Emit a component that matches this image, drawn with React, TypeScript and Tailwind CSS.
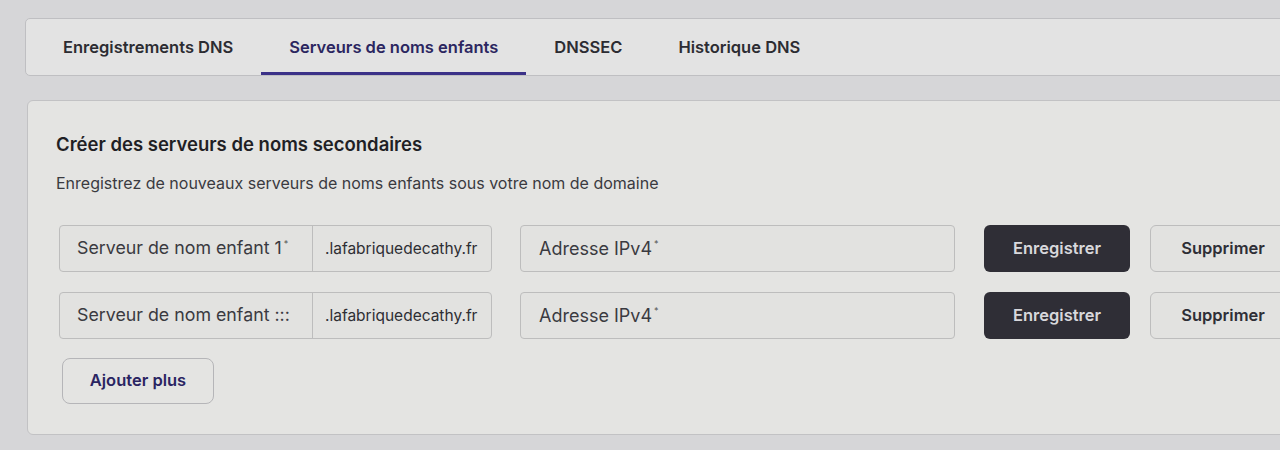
import { ReactNode } from 'react'

const tabs = ['Enregistrements DNS', 'Serveurs de noms enfants', 'DNSSEC', 'Historique DNS']

function Row({ label, children }: { label: ReactNode; children?: ReactNode }) {
  return (
    <div className="flex items-center">
      {/* Sous-domaine + suffixe */}
      <div className="flex h-[47px] w-[433px] rounded-[4px] border border-[#bdbdbd] bg-[#e2e2e0]">
        <div className="flex w-[253px] items-center border-r border-[#bdbdbd] pl-[17px] text-[17.8px] text-[#3a3a40]">
          {label}
        </div>
        <div className="flex flex-1 items-center pl-[12px] text-[15.5px] text-[#2e2e34]">.lafabriquedecathy.fr</div>
      </div>

      {/* IPv4 */}
      <div className="ml-[28px] flex h-[47px] w-[435px] items-center rounded-[4px] border border-[#bdbdbd] bg-[#e2e2e0] pl-[18px] text-[18px] text-[#3a3a40]">
        Adresse IPv4<sup className="ml-[2px] text-[9px] text-[#555]">*</sup>
      </div>

      <button className="ml-[29px] h-[47px] w-[146px] rounded-[6px] bg-[#2f2e36] text-[16.5px] font-semibold text-[#d8d8dc]">
        Enregistrer
      </button>
      <button className="ml-[20px] h-[47px] w-[146px] rounded-[6px] border border-[#bdbdbd] bg-[#e2e2e0] text-[16.5px] font-semibold text-[#2e2e36]">
        Supprimer
      </button>
      {children}
    </div>
  )
}

export default function App() {
  return (
    <div
      className="h-[450px] w-[1280px] overflow-hidden bg-[#d6d6d8] pt-[18px] pl-[25px]"
      style={{ fontFamily: 'Inter, "Noto Sans", sans-serif' }}
    >
      {/* Onglets */}
      <div className="flex h-[58px] w-[1300px] rounded-[5px] border border-[#bfbfc2] bg-[#e3e3e3] pl-[9px]">
        {tabs.map((t, i) => (
          <div
            key={t}
            className={
              i === 1
                ? 'flex items-center border-b-[3px] border-[#3b3188] px-[28px] pt-[3px] text-[16.5px] font-semibold text-[#2b2660]'
                : 'flex items-center px-[28px] text-[16.5px] font-semibold text-[#2c2c32]'
            }
          >
            {t}
          </div>
        ))}
      </div>

      {/* Carte serveurs */}
      <div className="mt-[24px] ml-[2px] h-[335px] w-[1300px] rounded-[6px] border border-[#c2c2c4] bg-[#e4e4e2] pt-[30px] pl-[28px]">
        <h2 className="text-[18.5px] font-semibold text-[#1f1f25]">Créer des serveurs de noms secondaires</h2>
        <p className="mt-[12px] text-[16px] text-[#3a3a40]">
          Enregistrez de nouveaux serveurs de noms enfants sous votre nom de domaine
        </p>

        <div className="mt-[30px] ml-[3px] flex flex-col gap-[20px]">
          <Row
            label={
              <>
                Serveur de nom enfant 1<sup className="ml-[2px] text-[9px] text-[#555]">*</sup>
              </>
            }
          />
          <Row label="Serveur de nom enfant :::" />
        </div>

        <button className="mt-[19px] ml-[6px] h-[46px] w-[152px] rounded-[8px] border border-[#b5b5b8] text-[16.5px] font-semibold text-[#2a2462]">
          Ajouter plus
        </button>
      </div>
    </div>
  )
}
